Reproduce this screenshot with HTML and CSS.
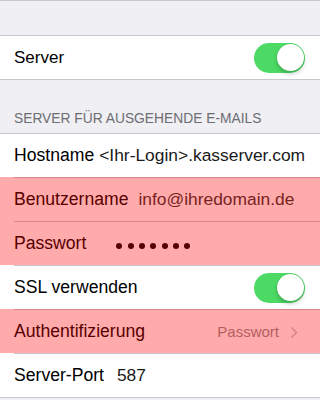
FILE: index.html
```html
<!DOCTYPE html>
<html lang="de">
<head>
<meta charset="utf-8">
<title>Server-Einstellungen</title>
<link rel="stylesheet" href="styles.css">
</head>
<body>
<div class="screen">
  <div class="gap-top"></div>
  <div class="group">
    <div class="row">
      <span class="label label-server">Server</span>
      <span class="switch"><span class="knob"></span></span>
    </div>
  </div>
  <div class="section-header">SERVER FÜR AUSGEHENDE E-MAILS</div>
  <div class="group">
    <div class="row">
      <span class="label">Hostname</span>
      <span class="value value-host">&lt;Ihr-Login&gt;.kasserver.com</span>
    </div>
    <div class="row hl">
      <span class="label">Benutzername</span>
      <span class="value value-user">info@ihredomain.de</span>
    </div>
    <div class="row hl">
      <span class="label">Passwort</span>
      <span class="dots" aria-label="Passwort verborgen"><i></i><i></i><i></i><i></i><i></i><i></i><i></i></span>
    </div>
    <div class="row">
      <span class="label">SSL verwenden</span>
      <span class="switch"><span class="knob"></span></span>
    </div>
    <div class="row hl">
      <span class="label">Authentifizierung</span>
      <span class="detail">Passwort</span>
      <svg class="chevron" width="8" height="13" viewBox="0 0 8 13"><path d="M1.5 1.5 L6.5 6.5 L1.5 11.5" fill="none" stroke="#c7c7cc" stroke-width="1.6"/></svg>
    </div>
    <div class="row">
      <span class="label">Server-Port</span>
      <span class="value value-port">587</span>
    </div>
  </div>
</div>
</body>
</html>
```

FILE: styles.css
```css
html, body {
  margin: 0;
  padding: 0;
}
body {
  background: #efeff4;
  font-family: "Liberation Sans", Arial, sans-serif;
  color: #000;
  width: 320px;
  height: 400px;
  overflow: hidden;
}
.screen {
  border-top: 1px solid #c8c7cc;
}
.gap-top {
  height: 34px;
}
.group {
  background: #fff;
  border-top: 1px solid #c8c7cc;
  border-bottom: 1px solid #c8c7cc;
}
.row {
  position: relative;
  height: 43px;
  display: flex;
  align-items: center;
  padding: 0 15px 0 14px;
}
.row + .row {
  margin-top: 1px;
}
.row + .row::before {
  content: "";
  position: absolute;
  top: -1px;
  left: 14px;
  right: 0;
  height: 1px;
  background: #c8c7cc;
}
.hl::after {
  content: "";
  position: absolute;
  top: -1px;
  left: 0;
  right: 0;
  bottom: 0;
  background: rgba(255, 0, 0, 0.33);
  pointer-events: none;
}
.label {
  font-size: 17.6px;
  white-space: nowrap;
}
.label-server {
  font-size: 17px;
}
.value {
  font-size: 17.4px;
  color: #1a1a1a;
  white-space: nowrap;
}
.value-host {
  margin-left: 5px;
}
.value-user {
  margin-left: 10px;
  color: #333;
}
.value-port {
  margin-left: 13px;
}
.dots {
  display: flex;
  gap: 5.3px;
  margin-left: 30px;
  margin-top: 4px;
}
.dots i {
  display: block;
  width: 6px;
  height: 6px;
  border-radius: 50%;
  background: #000;
}
.switch {
  margin-left: auto;
  position: relative;
  width: 51px;
  height: 30px;
  border-radius: 15px;
  background: #4cd964;
}
.knob {
  position: absolute;
  top: 1.5px;
  right: 1.5px;
  width: 27px;
  height: 27px;
  border-radius: 50%;
  background: #fff;
  box-shadow: 0 3px 4px rgba(0, 0, 0, 0.2), 0 0 0 0.5px rgba(0, 0, 0, 0.06);
}
.section-header {
  height: 53px;
  display: flex;
  align-items: flex-end;
  box-sizing: border-box;
  padding: 0 14px 6px;
  font-size: 13.8px;
  line-height: 16px;
  color: #6d6d72;
}
.detail {
  margin-left: auto;
  font-size: 15px;
  color: #8e8e93;
}
.chevron {
  margin-left: 11px;
  margin-right: 7px;
  margin-top: 2px;
}
```
